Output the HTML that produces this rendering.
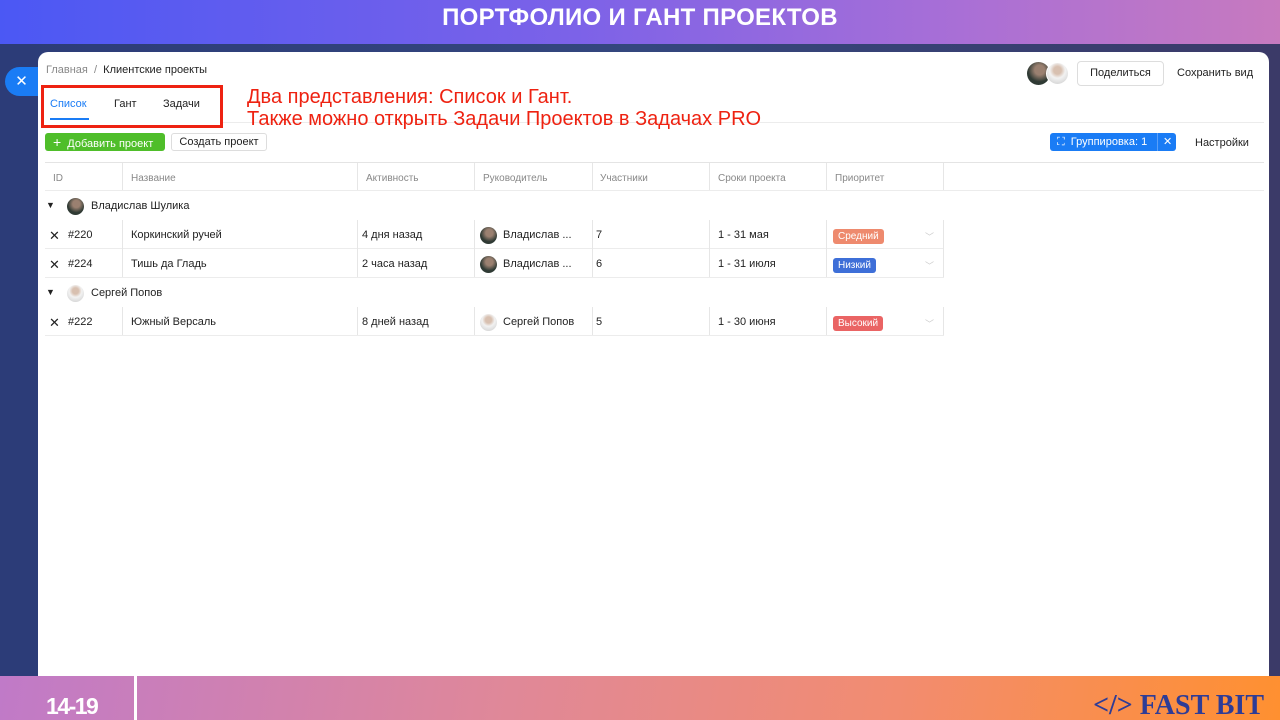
<!DOCTYPE html>
<html><head><meta charset="utf-8"><style>
*{box-sizing:border-box;margin:0;padding:0}
html,body{width:1280px;height:720px;overflow:hidden}
body{position:relative;font-family:"Liberation Sans",Arial,sans-serif;background:linear-gradient(90deg,#2c3c78,#34477e 50%,#3b3a68);}
.hdr{position:absolute;left:0;top:0;width:1280px;height:44px;background:linear-gradient(90deg,#4b58f4,#7c62e8 45%,#a96fd6 75%,#c77abf);color:#fff;font-weight:bold;font-size:24px;text-align:center;line-height:36px;letter-spacing:0.3px}
.panel{position:absolute;left:38px;top:52px;width:1231px;height:640px;background:#fff;border-radius:10px 10px 0 0}
.ftr{position:absolute;left:0;top:676px;width:1280px;height:44px;background:linear-gradient(100deg,#c07ac8,#e08898 40%,#f28c70 70%,#ff9030)}
.ftr .num{position:absolute;left:46px;top:16px;color:#fff;font-weight:bold;font-size:23px;line-height:28px;letter-spacing:-1.5px}
.ftr .sep{position:absolute;left:134px;top:0;width:3px;height:44px;background:#fff}
.ftr .logo{position:absolute;right:16px;top:12px;color:#2e3c96;font-family:"Liberation Serif",serif;font-weight:bold;font-size:28px;line-height:36px}
.xbtn{position:absolute;left:5px;top:67px;width:33px;height:29px;background:#1a7cf5;border-radius:15px 0 0 15px;color:#fff;font-size:15px;text-align:center;line-height:29px}
.t{position:absolute;font-size:11px;color:#222;white-space:nowrap}
.red{position:absolute;color:#ee2211;font-size:20px;line-height:22px;left:247px;top:86px;z-index:5;white-space:nowrap}
.box{position:absolute;left:41px;top:85px;width:182px;height:43px;border:3px solid #ee2211}
.line{position:absolute;background:#ececec;height:1px}
.vl{position:absolute;background:#e6e6e6;width:1px}
.th{position:absolute;font-size:10px;color:#888;top:173px}
.av{position:absolute;width:17px;height:17px;border-radius:50%;background:radial-gradient(circle at 55% 35%,#9a8070 25%,#2f3a34 60%)}
.av2{background:radial-gradient(circle at 50% 35%,#d8c0b0 22%,#f2f2f2 45%,#c8c8c8)}
.tag{position:absolute;color:#fff;font-size:10px;border-radius:3px;height:15px;line-height:15px;padding:0 5px}
.chev{position:absolute;color:#ccc;font-size:9px}
</style></head><body>
<div class="hdr">ПОРТФОЛИО И ГАНТ ПРОЕКТОВ</div>
<div class="xbtn">✕</div>
<div class="panel"></div>
<div class="t" style="left:46px;top:64px;color:#888">Главная &nbsp;/&nbsp; <span style="color:#222">Клиентские проекты</span></div>
<div class="av" style="left:1027px;top:62px;width:23px;height:23px"></div>
<div class="av av2" style="left:1046px;top:62px;width:23px;height:23px;border:1px solid #fff"></div>
<div style="position:absolute;left:1077px;top:61px;width:87px;height:25px;border:1px solid #ddd;border-radius:4px;font-size:11px;text-align:center;line-height:23px;color:#222">Поделиться</div>
<div class="t" style="left:1177px;top:67px">Сохранить вид</div>
<div class="t" style="left:50px;top:98px;color:#1a7cf5">Список</div>
<div style="position:absolute;left:50px;top:118px;width:39px;height:2px;background:#1a7cf5"></div>
<div class="t" style="left:114px;top:98px">Гант</div>
<div class="t" style="left:163px;top:98px">Задачи</div>
<div class="box"></div>
<div class="line" style="left:223px;top:122px;width:1041px"></div>
<div class="red">Два представления: Список и Гант.<br>Также можно открыть Задачи Проектов в Задачах PRO</div>
<div style="position:absolute;left:45px;top:133px;width:120px;height:18px;background:#4fbe2a;border-radius:3px;color:#fff;font-size:11px;line-height:18px;padding-left:8px"><span style="font-size:14px">+</span>&nbsp; Добавить проект</div>
<div style="position:absolute;left:171px;top:133px;width:96px;height:18px;border:1px solid #ddd;border-radius:3px;font-size:11px;line-height:16px;text-align:center;color:#222">Создать проект</div>
<div style="position:absolute;left:1050px;top:133px;width:126px;height:18px;background:#1a7cf5;border-radius:3px;color:#fff;font-size:11px;line-height:18px;padding-left:7px">⛶ &nbsp;Группировка: 1<span style="position:absolute;left:107px;top:0;border-left:1px solid #5a9ff8;padding-left:5px">✕</span></div>
<div class="t" style="left:1195px;top:137px">Настройки</div>
<div class="line" style="left:45px;top:162px;width:1219px;background:#e4e4e4"></div>
<div class="line" style="left:45px;top:190px;width:1219px"></div>
<div class="vl" style="left:122px;top:163px;height:27px"></div>
<div class="vl" style="left:357px;top:163px;height:27px"></div>
<div class="vl" style="left:474px;top:163px;height:27px"></div>
<div class="vl" style="left:592px;top:163px;height:27px"></div>
<div class="vl" style="left:709px;top:163px;height:27px"></div>
<div class="vl" style="left:826px;top:163px;height:27px"></div>
<div class="vl" style="left:943px;top:163px;height:27px"></div>
<div class="th" style="left:53px">ID</div>
<div class="th" style="left:131px">Название</div>
<div class="th" style="left:366px">Активность</div>
<div class="th" style="left:483px">Руководитель</div>
<div class="th" style="left:600px">Участники</div>
<div class="th" style="left:718px">Сроки проекта</div>
<div class="th" style="left:835px">Приоритет</div>
<div class="t" style="left:46px;top:200px;font-size:9px">▼</div>
<div class="av" style="left:67px;top:198px"></div>
<div class="t" style="left:91px;top:200px">Владислав Шулика</div>
<div class="line" style="left:45px;top:248px;width:899px"></div>
<div class="line" style="left:45px;top:277px;width:899px"></div>
<div class="vl" style="left:122px;top:220px;height:57px"></div>
<div class="vl" style="left:357px;top:220px;height:57px"></div>
<div class="vl" style="left:474px;top:220px;height:57px"></div>
<div class="vl" style="left:592px;top:220px;height:57px"></div>
<div class="vl" style="left:709px;top:220px;height:57px"></div>
<div class="vl" style="left:826px;top:220px;height:57px"></div>
<div class="vl" style="left:943px;top:220px;height:57px"></div>
<div class="t" style="left:49px;top:228px;font-size:13px">✕</div>
<div class="t" style="left:68px;top:229px">#220</div>
<div class="t" style="left:131px;top:229px">Коркинский ручей</div>
<div class="t" style="left:362px;top:229px">4 дня назад</div>
<div class="av" style="left:480px;top:227px"></div>
<div class="t" style="left:503px;top:229px">Владислав ...</div>
<div class="t" style="left:596px;top:229px">7</div>
<div class="t" style="left:718px;top:229px">1 - 31 мая</div>
<div class="tag" style="left:833px;top:229px;background:#ee8a6e">Средний</div>
<div class="chev" style="left:925px;top:230px">﹀</div>
<div class="t" style="left:49px;top:257px;font-size:13px">✕</div>
<div class="t" style="left:68px;top:258px">#224</div>
<div class="t" style="left:131px;top:258px">Тишь да Гладь</div>
<div class="t" style="left:362px;top:258px">2 часа назад</div>
<div class="av" style="left:480px;top:256px"></div>
<div class="t" style="left:503px;top:258px">Владислав ...</div>
<div class="t" style="left:596px;top:258px">6</div>
<div class="t" style="left:718px;top:258px">1 - 31 июля</div>
<div class="tag" style="left:833px;top:258px;background:#3e6fd8">Низкий</div>
<div class="chev" style="left:925px;top:259px">﹀</div>
<div class="t" style="left:46px;top:287px;font-size:9px">▼</div>
<div class="av av2" style="left:67px;top:285px"></div>
<div class="t" style="left:91px;top:287px">Сергей Попов</div>
<div class="line" style="left:45px;top:335px;width:899px"></div>
<div class="vl" style="left:122px;top:307px;height:28px"></div>
<div class="vl" style="left:357px;top:307px;height:28px"></div>
<div class="vl" style="left:474px;top:307px;height:28px"></div>
<div class="vl" style="left:592px;top:307px;height:28px"></div>
<div class="vl" style="left:709px;top:307px;height:28px"></div>
<div class="vl" style="left:826px;top:307px;height:28px"></div>
<div class="vl" style="left:943px;top:307px;height:28px"></div>
<div class="t" style="left:49px;top:315px;font-size:13px">✕</div>
<div class="t" style="left:68px;top:316px">#222</div>
<div class="t" style="left:131px;top:316px">Южный Версаль</div>
<div class="t" style="left:362px;top:316px">8 дней назад</div>
<div class="av av2" style="left:480px;top:314px"></div>
<div class="t" style="left:503px;top:316px">Сергей Попов</div>
<div class="t" style="left:596px;top:316px">5</div>
<div class="t" style="left:718px;top:316px">1 - 30 июня</div>
<div class="tag" style="left:833px;top:316px;background:#ea6464">Высокий</div>
<div class="chev" style="left:925px;top:317px">﹀</div>
<div class="ftr"><div class="num">14-19</div><div class="sep"></div><div class="logo">&lt;/&gt; FAST BIT</div></div>
</body></html>
